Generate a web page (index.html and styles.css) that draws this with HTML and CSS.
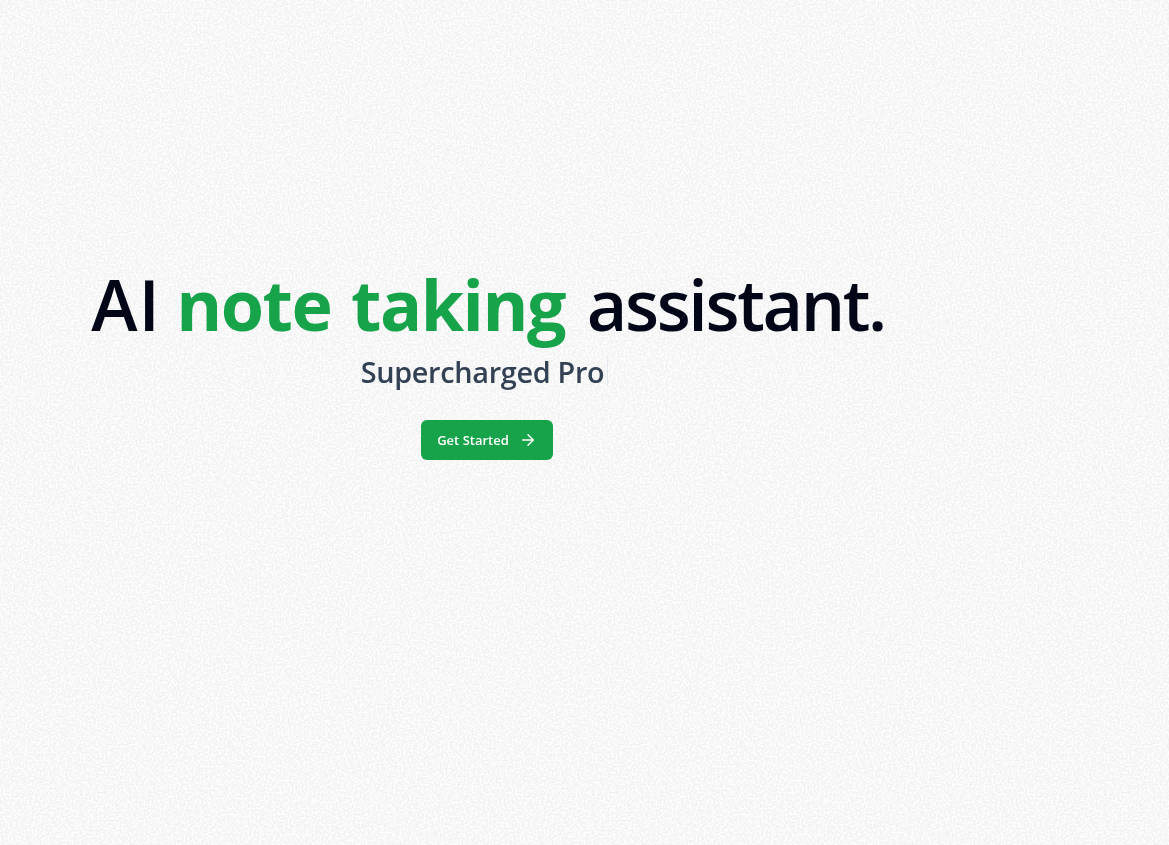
FILE: index.html
```html
<!DOCTYPE html>
<html lang="en">
<head>
  <meta charset="UTF-8">
  <meta name="viewport" content="width=device-width, initial-scale=1.0">
  <title>AI note taking assistant</title>
  <link rel="stylesheet" href="styles.css">
</head>
<body>

  <!-- paper grain behind the page -->
  <svg class="grain" aria-hidden="true">
    <filter id="grain-filter" x="0" y="0" width="100%" height="100%">
      <feTurbulence type="fractalNoise" baseFrequency="0.5" numOctaves="2" seed="4"/>
      <feColorMatrix type="matrix" values="0 0 0 0 1  0 0 0 0 1  0 0 0 0 1  3 0 0 0 -1.1"/>
    </filter>
    <rect width="100%" height="100%" filter="url(#grain-filter)"/>
  </svg>

  <main class="hero">
    <h1 class="hero-title"><span class="hero-lead">AI</span> <span class="hero-accent">note taking</span> assistant.</h1>

    <div class="hero-sub">
      <span>Supercharged Pro</span><span class="caret"></span>
    </div>

    <a class="cta" href="#">
      Get Started
      <svg class="cta-icon" viewBox="0 0 24 24" fill="none" stroke="currentColor" stroke-width="2" stroke-linecap="round" stroke-linejoin="round">
        <path d="M5 12h14"/>
        <path d="M12 5l7 7-7 7"/>
      </svg>
    </a>
  </main>

</body>
</html>
```

FILE: styles.css
```css
body {
  font-family: 'Open Sans', 'Noto Sans', sans-serif;
  background-color: #f2f2f2;
  margin: 0;
  padding: 0;
  height: 845px;
  overflow: hidden;
  color: #020617;
}

.grain {
  position: fixed;
  top: 0;
  left: 0;
  width: 100%;
  height: 100%;
}

.hero {
  position: relative;
  display: flex;
  flex-direction: column;
  align-items: center;
  width: 974px;
  padding-top: 256px;
}

.hero-title {
  margin: 0 0 0 2px;
  font-size: 70px;
  line-height: 96px;
  font-weight: 600;
  letter-spacing: -2.4px;
  word-spacing: 3px;
  white-space: nowrap;
}

.hero-lead {
  letter-spacing: 1px;
  margin-right: -3.4px;
}

.hero-accent {
  color: #16a34a;
  font-weight: 700;
  letter-spacing: -1.5px;
  margin-right: 3px;
}

.hero-sub {
  display: flex;
  align-items: center;
  margin-top: 1px;
  height: 36px;
  font-size: 28.8px;
  font-weight: 600;
  letter-spacing: -0.3px;
  color: #334155;
}

.caret {
  width: 1px;
  height: 30px;
  margin-left: 3px;
  margin-right: 5px;
  background-color: #e2e8f0;
}

.cta {
  display: flex;
  align-items: center;
  gap: 10px;
  margin-top: 31px;
  height: 40px;
  padding: 0 16px;
  border-radius: 6px;
  background-color: #16a34a;
  color: #fff;
  font-size: 13px;
  font-weight: 600;
  text-decoration: none;
}

.cta-icon {
  width: 18px;
  height: 18px;
}
```
